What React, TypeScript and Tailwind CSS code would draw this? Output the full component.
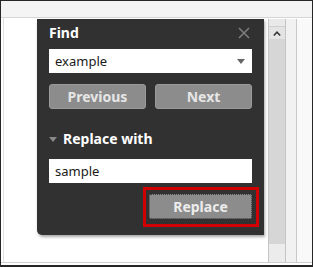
import React from "react";

export default function App() {
  return (
    <div
      className="w-[313px] h-[267px] bg-white border border-b-2 border-[#262626] flex flex-col overflow-hidden"
      style={{ fontFamily: '"Noto Sans", "Open Sans", Arial, sans-serif' }}
    >
      <div className="h-[17px] bg-[#f4f4f4] border-b border-[#d6d6d6] shrink-0" />
      <div className="flex flex-1 border-b border-[#cfcfcf] pl-[2px]">
        <div className="flex-1 border-l border-[#e2e2e2] flex pl-[33px] pt-[1px]">
          {/* Panel */}
          <div className="w-[227px] h-[216px] bg-[#313131] rounded-bl-[5px] shadow-[1px_2px_3px_rgba(0,0,0,0.35)] pt-[5px] px-[12px] flex flex-col">
            <div className="h-[18px] flex items-center justify-between">
              <span className="text-[14px] leading-[18px] font-bold text-white">Find</span>
              <svg width="12" height="12" viewBox="0 0 12 12" className="mr-[2px]">
                <path d="M1 1 L11 11 M11 1 L1 11" stroke="#7d7d7d" strokeWidth="1.6" />
              </svg>
            </div>
            <div className="mt-[7px] h-[24px] bg-white flex items-center justify-between pl-[6px] pr-[7px]">
              <span className="text-[13px] text-[#1a1a1a] leading-none">example</span>
              <svg width="8" height="5" viewBox="0 0 8 5">
                <path d="M0 0 L8 0 L4 5 Z" fill="#666" />
              </svg>
            </div>
            <div className="mt-[11px] grid grid-cols-2 gap-[9px]">
              <div className="h-[25px] bg-[#8c8c8c] border border-[#9a9a9a] rounded-[3px] flex items-center justify-center text-[14px] font-bold text-[#e6e6e6]">
                Previous
              </div>
              <div className="h-[25px] bg-[#8c8c8c] border border-[#9a9a9a] rounded-[3px] flex items-center justify-center text-[14px] font-bold text-[#e6e6e6]">
                Next
              </div>
            </div>
            <div className="mt-[21px] h-[18px] flex items-center gap-[6px]">
              <svg width="8" height="5" viewBox="0 0 8 5">
                <path d="M0 0 L8 0 L4 5 Z" fill="#8a8a8a" />
              </svg>
              <span className="text-[14px] leading-[18px] font-bold text-white">Replace with</span>
            </div>
            <div className="mt-[11px] h-[24px] bg-white flex items-center pl-[6px]">
              <span className="text-[13px] text-[#1a1a1a] leading-none">sample</span>
            </div>
            <div className="mt-[11px] flex justify-end">
              <div className="relative">
                <div className="absolute left-[-6px] right-[-7px] top-[-7px] bottom-[-8px] border-[3px] border-[#d10000]" />
                <div className="w-[103px] h-[25px] bg-[#8c8c8c] border border-dotted border-[#3a3a3a] rounded-[2px] flex items-center justify-center text-[14px] font-bold text-[#ececec]">
                  Replace
                </div>
              </div>
            </div>
          </div>
          <div className="w-[4px]" />
          {/* Scrollbar */}
          <div className="w-[18px] border-x border-[#c4c4c4] bg-[#ececec] flex flex-col">
            <div className="h-[225px] bg-[#d6d6d6] flex flex-col">
              <div className="h-[8px] bg-[#e9e9e9] border-b border-[#cfcfcf]" />
              <div className="h-[12px] bg-[#e4e4e4] flex items-center justify-center">
                <svg width="8" height="5" viewBox="0 0 8 5">
                  <path d="M0.8 4.5 L4 1.2 L7.2 4.5" stroke="#333" strokeWidth="1.5" fill="none" />
                </svg>
              </div>
            </div>
          </div>
          <div className="w-[11px] bg-[#f1f1f1] border-r border-[#c9c9c9]" />
          <div className="flex-1 bg-[#f9f9f9]" />
        </div>
      </div>
      <div className="h-[2px] bg-white shrink-0" />
    </div>
  );
}
